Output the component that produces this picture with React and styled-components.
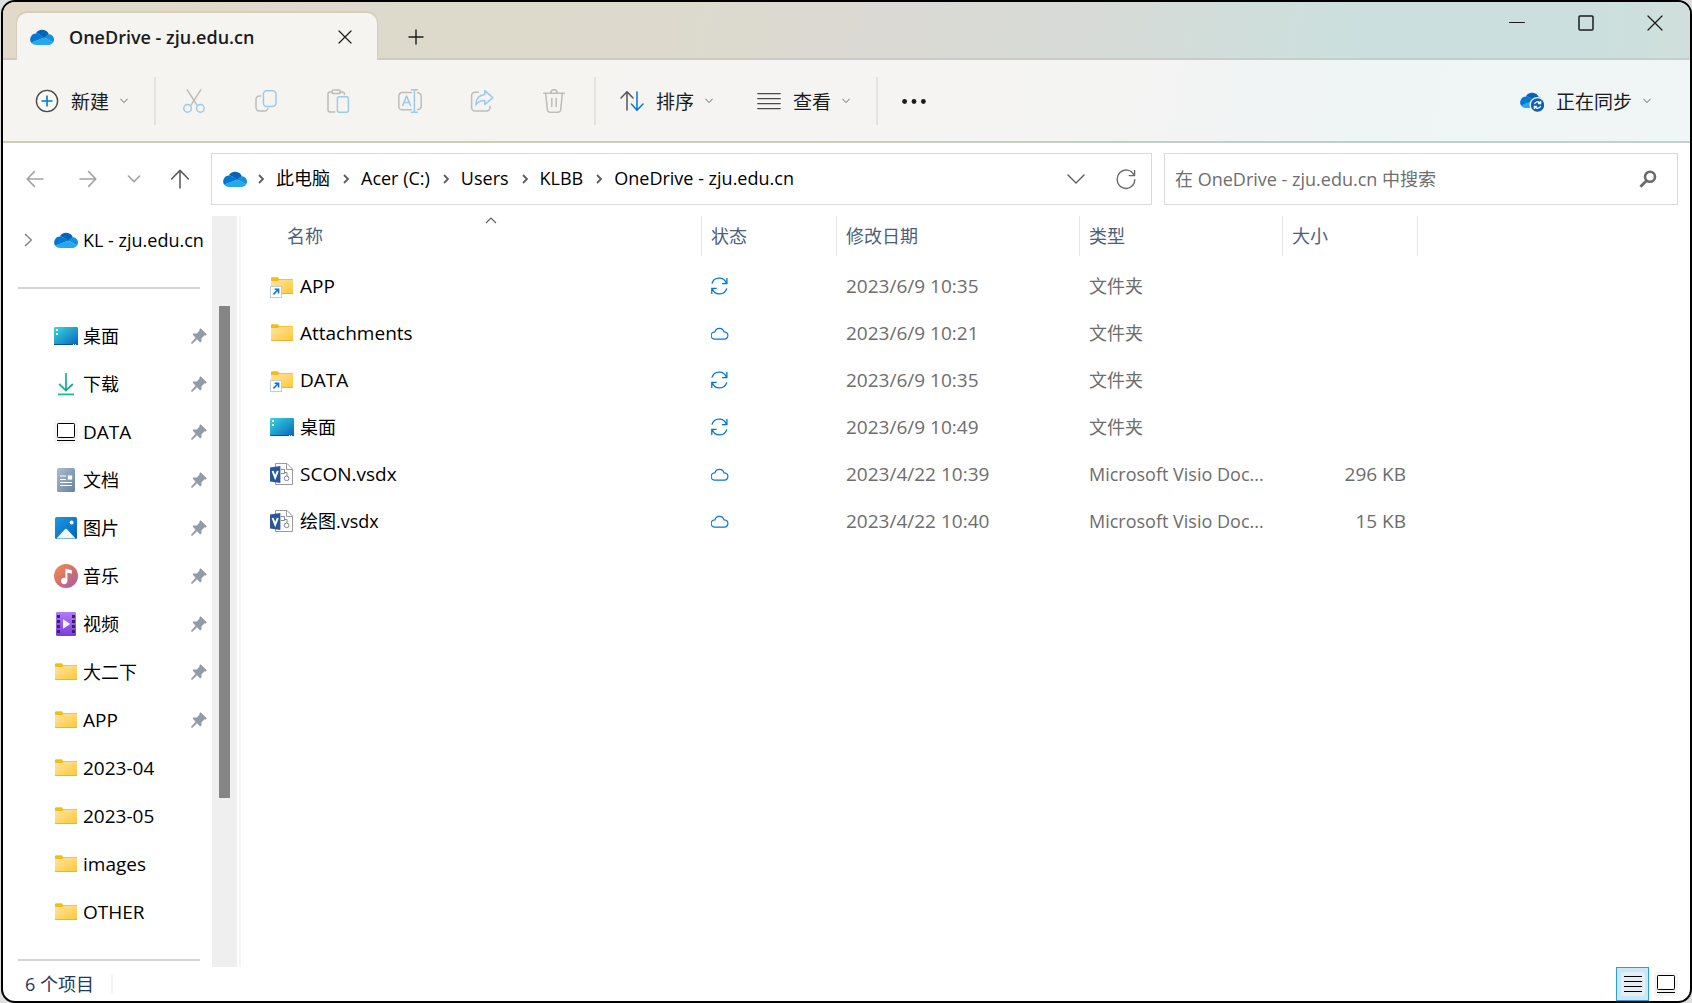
import React from "react";
import styled, { createGlobalStyle } from "styled-components";

const GlobalStyle = createGlobalStyle`
  *, *::before, *::after { box-sizing: border-box; }
  body {
    margin: 0;
    background: #dedede;
    font-family: "Open Sans", "Noto Sans CJK SC", sans-serif;
    font-size: 18px;
    line-height: 24px;
    color: #000;
  }
  button, input {
    font: inherit;
    color: inherit;
    background: none;
    border: 0;
    padding: 0;
    margin: 0;
  }
  svg { display: block; flex: none; }
`;

/* ---------- window frame ---------- */

const Window = styled.div`
  display: flex;
  flex-direction: column;
  height: 100vh;
  margin-left: 1px;
  border: 2px solid #000;
  border-radius: 14px;
  background: #fff;
  overflow: hidden;
`;

const TitleBar = styled.header`
  display: flex;
  flex: none;
  height: 58px;
  padding-left: 14px;
  border-bottom: 2px solid rgba(150, 150, 140, 0.22);
  background: linear-gradient(100deg, #e2d9c9 0%, #dddacb 25%, #dddacd 40%, #dbd9d4 52%, #d7dbd7 65%, #cbe0de 80%, #cbe0de 94%, #d0dfdc 100%);
`;

const Tab = styled.div`
  position: relative;
  display: flex;
  align-items: center;
  width: 360px;
  height: 47px;
  margin: 11px 0 -2px;
  padding: 0 25px 0 13px;
  border-radius: 10px 10px 0 0;
  background: #f5f4f0;
  box-shadow: 0 -1px 0 1px #d6cdbc;
  clip-path: inset(-2px -6px 0 -6px);
`;

const TabTitle = styled.span`
  flex: 1;
  margin-left: 15px;
  font-weight: 600;
  color: #1b1b1b;
  white-space: nowrap;
`;

const GlyphButton = styled.button`
  display: flex;
  align-items: center;
  justify-content: center;
  width: ${(p) => p.$w || 24}px;
  height: ${(p) => p.$h || 24}px;
`;

const NewTabSlot = styled.div`
  display: flex;
  align-items: center;
  padding: 13px 0 0 27px;
`;

const CaptionButtons = styled.div`
  display: flex;
  margin-left: auto;
`;

/* ---------- command bar ---------- */

const CommandBar = styled.div`
  display: flex;
  flex: none;
  align-items: center;
  height: 83px;
  padding: 0 17px 0 10px;
  border-bottom: 2px solid #cacdbf;
  border-image: linear-gradient(90deg, #cfcdb9, #c9cdbd 50%, #c0cfcc 80%, #c3d0ce) 1;
  background: linear-gradient(100deg, #f5f4f0 0%, #f4f4f2 65%, #eff4f5 78%, #f0f5f6 100%);
`;

const MenuButton = styled.button`
  display: flex;
  align-items: center;
  height: 48px;
  padding: 0 22px;
  font-size: 19px;
  color: #1b1b1b;
  white-space: nowrap;
  margin-left: ${(p) => (p.$end ? "auto" : 0)};
`;

const MenuLabel = styled.span`
  margin: 0 11px 0 12px;
  padding-top: 3px;
`;

const Separator = styled.span`
  width: 2px;
  height: 48px;
  margin: 0 2px 0 4px;
  background: #e4e3e0;
`;

/* ---------- navigation row ---------- */

const NavRow = styled.div`
  display: flex;
  flex: none;
  padding: 10px 12px 11px 5px;
`;

const NavButtons = styled.div`
  display: flex;
  flex: none;
  width: 203px;
`;

const AddressBar = styled.div`
  display: flex;
  flex: 1;
  align-items: center;
  min-width: 0;
  height: 52px;
  margin-right: 12px;
  padding-left: 11px;
  border: 1px solid #d9d9d9;
`;

const Crumbs = styled.nav`
  display: flex;
  flex: 1;
  align-items: center;
  white-space: nowrap;
`;

const Crumb = styled.button`
  margin: 0 13px 0 12px;
  padding-bottom: 2px;
`;

const CrumbRoot = styled.span`
  margin-right: 11px;
`;

const SearchBox = styled.label`
  display: flex;
  flex: 0 1 514px;
  align-items: center;
  height: 52px;
  padding: 0 20px 0 10px;
  border: 1px solid #d9d9d9;
`;

const SearchInput = styled.input`
  flex: 1;
  min-width: 0;
  outline: 0;
  &::placeholder { color: #6e6e6e; opacity: 1; }
`;

/* ---------- body ---------- */

const Body = styled.div`
  display: flex;
  flex: 1;
  min-height: 0;
`;

const Sidebar = styled.nav`
  flex: none;
  width: 209px;
  overflow: hidden;
`;

const SideItem = styled.a`
  display: flex;
  align-items: center;
  height: 48px;
  padding-right: 5px;
  color: #000;
  text-decoration: none;
  white-space: nowrap;
`;

const Expander = styled.span`
  flex: none;
  width: 51px;
  padding-left: 21px;
`;

const IconSlot = styled.span`
  display: flex;
  flex: none;
  justify-content: center;
  width: 24px;
  margin-right: ${(p) => p.$gap || 5}px;
`;

const SideLabel = styled.span`
  flex: 1;
  font-size: ${(p) => (p.$latin ? 19 : 18)}px;
`;

const SideDivider = styled.hr`
  height: 2px;
  margin: 23px 12px 23px 15px;
  border: 0;
  background: #d4d4d4;
`;

const ScrollTrack = styled.div`
  flex: none;
  width: 25px;
  padding: 90px 7px 0;
  background: #efefef;
`;

const ScrollThumb = styled.div`
  height: 75%;
  max-height: 492px;
  background: #858585;
`;

const Content = styled.main`
  flex: 1;
  min-width: 0;
  margin-left: 2px;
  border-left: 2px solid #f5f5f5;
`;

const FileTable = styled.table`
  width: 1177px;
  table-layout: fixed;
  border-collapse: collapse;
`;

const HeadCell = styled.th`
  position: relative;
  padding: 0 0 6px;
  font-weight: 400;
  text-align: left;
`;

const HeadButton = styled.button`
  display: block;
  width: 100%;
  height: 40px;
  padding-left: ${(p) => (p.$first ? 46 : 9)}px;
  border-right: 1px solid #e4e4e4;
  color: #4c607a;
  text-align: left;
`;

const SortCaret = styled.svg`
  position: absolute;
  top: 0;
  left: 50%;
`;

const Cell = styled.td`
  height: 47px;
  padding: 0 ${(p) => (p.$right ? 12 : 0)}px 0 9px;
  font-size: ${(p) => (p.$latin ? 19 : 18)}px;
  color: #6d6d6d;
  text-align: ${(p) => (p.$right ? "right" : "left")};
  white-space: nowrap;
`;

const FileName = styled.div`
  display: flex;
  align-items: center;
  padding-left: 20px;
  color: #000;
`;

const StatusBar = styled.footer`
  display: flex;
  flex: none;
  align-items: center;
  height: 34px;
  padding: 0 12px 0 22px;
  color: #1e395b;
`;

const StatusCount = styled.span`
  padding-right: 17px;
  border-right: 2px solid #f3f3f3;
  line-height: 18px;
`;

const ViewButton = styled.button`
  display: flex;
  align-items: center;
  justify-content: center;
  width: 33px;
  height: 34px;
  border: 1px solid ${(p) => (p.$active ? "#26a0da" : "transparent")};
  background: ${(p) => (p.$active ? "#cbe8f6" : "transparent")};
`;

const ViewButtons = styled.div`
  display: flex;
  margin: 0 -4px 0 auto;
`;

/* ---------- icons ---------- */

const CloudShape = () => (
  <>
    <path fill="#0078d4" d="M9.2 5.4A6 6 0 0 0 6 4.5 6 6 0 0 0 1.1 13.7L14.8 8.6z" />
    <path fill="#0364b8" d="M5.8 4.5A7.3 7.3 0 0 1 18.9 5.3L14.8 8.9 9.2 5.5A6 6 0 0 0 5.8 4.5z" />
    <path fill="#1490df" d="M19 5.2A5.4 5.4 0 0 1 23.2 13.4L14.2 8.5Q16.4 5.4 19 5.2z" />
    <path fill="#28a8ea" d="M14.3 8.4 23.2 13.2A5.3 5.3 0 0 1 19 16H6A6 6 0 0 1 1 13.5z" />
  </>
);

const OneDrive = () => (
  <svg width="24" height="16" viewBox="0 0 24 16"><CloudShape /></svg>
);

const OneDriveSync = () => (
  <svg width="24" height="24" viewBox="0 0 24 24">
    <g transform="translate(0 3)"><CloudShape /></g>
    <circle cx="17.5" cy="16" r="8" fill="#f0f5f6" />
    <circle cx="17.5" cy="16" r="6.7" fill="#0f5fb8" />
    <path d="M14.4 15.2a3.2 3.2 0 0 1 5.8-1M20.6 12v2.5h-2.5M20.6 16.8a3.2 3.2 0 0 1-5.8 1M14.4 20v-2.5h2.5" fill="none" stroke="#fff" strokeWidth="1.3" />
  </svg>
);

const Line = ({ w, h = w, d, c = "#1b1b1b", s = 1.5, children }) => (
  <svg width={w} height={h} viewBox={`0 0 ${w} ${h}`} fill="none" stroke={c} strokeWidth={s} strokeLinecap="round" strokeLinejoin="round">
    {d && <path d={d} />}
    {children}
  </svg>
);

const MenuChevron = () => <Line w={8} h={6} d="M.6 1l3.4 3.6L7.4 1" c="#6a6a6a" s={1} />;

const GREY = "#bdbcba";
const BLUE = "#9ccaec";

const AddIcon = () => (
  <Line w={24} c="#4a4a4a" s={1.4}>
    <circle cx="12" cy="12" r="10.6" fill="#fbfbfa" />
    <path d="M12 7v10M7 12h10" stroke="#0078d4" strokeWidth="1.6" />
  </Line>
);

const CutIcon = () => (
  <Line w={24} c={GREY}>
    <path d="M5.2 .8L15 16.2M18.8 .8L9 16.2" />
    <circle cx="5.6" cy="19.4" r="3.8" stroke={BLUE} fill="#f5f4f0" />
    <circle cx="18.4" cy="19.4" r="3.8" stroke={BLUE} fill="#f5f4f0" />
  </Line>
);

const CopyIcon = () => (
  <Line w={24} c={GREY}>
    <path d="M6.6 7H5.4a3.4 3.4 0 0 0-3.4 3.4v8.2A3.4 3.4 0 0 0 5.4 22h5.2a3.4 3.4 0 0 0 3.2-2.4" />
    <rect x="9.4" y="1.8" width="12.6" height="15.6" rx="3.4" stroke={BLUE} />
  </Line>
);

const PasteIcon = () => (
  <Line w={24} c={GREY}>
    <path d="M6 3H4a2 2 0 0 0-2 2v16a2 2 0 0 0 2 2h4.6M14 3h2.4a2 2 0 0 1 2 2v.6" />
    <rect x="6" y="1" width="8.4" height="3.6" rx="1.8" />
    <rect x="11.4" y="7.8" width="11" height="15.4" rx="2" stroke={BLUE} />
  </Line>
);

const RenameIcon = () => (
  <Line w={24} c={GREY}>
    <path d="M13.4 3.6H4.2A3.4 3.4 0 0 0 .8 7v10.4a3.4 3.4 0 0 0 3.4 3.4h9.2M19.6 3.8a3.4 3.4 0 0 1 3.6 3.4v10a3.4 3.4 0 0 1-3.6 3.4" />
    <path d="M4.6 16.6L8.6 7l4 9.6M6 13.6h5.4M16.4 .8v22.4M13.4 .8h6M13.4 23.2h6" stroke={BLUE} />
  </Line>
);

const ShareIcon = () => (
  <Line w={24} c={GREY}>
    <path d="M8.4 3.2H5A3.4 3.4 0 0 0 1.6 6.6v12A3.4 3.4 0 0 0 5 22h11.6a3.4 3.4 0 0 0 3.4-3.4v-1.4" />
    <path d="M14.8 1.6l8 7-8 7v-4q-5.8-.2-9 4.4Q6.2 6.4 14.8 5.6z" stroke={BLUE} />
  </Line>
);

const TrashIcon = () => (
  <Line w={24} c={GREY}>
    <path d="M1.6 4.2h20.8M3.6 4.2l1.8 17a2.4 2.4 0 0 0 2.4 2h8.4a2.4 2.4 0 0 0 2.4-2l1.8-17M8.8 4a3.2 3.2 0 0 1 6.4 0M9.8 9.6v7.8M14.2 9.6v7.8" />
  </Line>
);

const SortIcon = () => (
  <Line w={24} c="#555">
    <path d="M7 21V3M1 9l6-6.2L13 9" />
    <path d="M17 3v18M11.4 15l5.6 6.2L23 15" stroke="#0078d4" />
  </Line>
);

const ViewIcon = () => (
  <Line w={24} c="#4a4a4a" s={1.4} d="M.8 4.6h22.4M.8 9.6h22.4M.8 14.6h22.4M.8 19.6h22.4" />
);

const MoreIcon = () => (
  <svg width="24" height="24" viewBox="0 0 24 24" fill="#1b1b1b">
    <circle cx="2.6" cy="12.5" r="2.4" /><circle cx="12" cy="12.5" r="2.4" /><circle cx="21.4" cy="12.5" r="2.4" />
  </svg>
);

const Folder = ({ link }) => (
  <svg width="24" height="24" viewBox="0 0 24 24">
    <defs>
      <linearGradient id="folderFill" x1="0" y1="0" x2="1" y2="1">
        <stop offset="0" stopColor="#ffe69c" /><stop offset="1" stopColor="#ffc73a" />
      </linearGradient>
    </defs>
    <path fill="#fbb917" d="M1 4.2Q1 3.2 2 3.2H7.6L9.4 5H23V9H1z" />
    <path fill="url(#folderFill)" d="M1 7H8L9.6 5.8H23V20H1z" />
    <path fill="#eba82c" d="M1 19.2H23V20H1z" />
    {link && (
      <>
        <rect x=".5" y="12.5" width="11" height="11" fill="#fff" stroke="#c3ccd6" />
        <path d="M3.4 20.4L8.4 15.4M4.6 15.2H8.6V19.4" fill="none" stroke="#0a78d0" strokeWidth="1.5" />
      </>
    )}
  </svg>
);

const Desktop = () => (
  <svg width="24" height="24" viewBox="0 0 24 24">
    <defs>
      <linearGradient id="deskFill" x1="0" y1="0" x2="1" y2="1">
        <stop offset="0" stopColor="#36d9e0" /><stop offset="1" stopColor="#0b63ba" />
      </linearGradient>
    </defs>
    <rect y="3" width="24" height="18" rx="1.2" fill="url(#deskFill)" />
    <path fill="#0a5495" d="M0 20H24V20.4Q24 21 23 21H1Q0 21 0 20.4z" />
    <path fill="#fff" d="M2 5h2v2H2zM2 9h2v2H2zM19 20h1v1h-1zM21 20h1v1h-1z" />
  </svg>
);

const Download = () => (
  <svg width="24" height="24" viewBox="0 0 24 24" fill="none">
    <defs>
      <linearGradient id="downFill" gradientUnits="userSpaceOnUse" x1="4" y1="0" x2="18" y2="20">
        <stop offset="0" stopColor="#2bc78c" /><stop offset="1" stopColor="#10a0a0" />
      </linearGradient>
    </defs>
    <path d="M12 1V18.4M5.2 12L12 18.6 18.8 12" stroke="url(#downFill)" strokeWidth="1.8" />
    <path d="M4 22.4H20" stroke="#1fb795" strokeWidth="1.8" />
  </svg>
);

const Drive = () => (
  <svg width="24" height="24" viewBox="0 0 24 24">
    <rect width="24" height="24" rx="3" fill="#f5f5f5" />
    <rect x="3.5" y="3.5" width="17" height="14" rx=".8" fill="#fff" stroke="#000" />
    <path d="M3 20.5H21" stroke="#000" />
  </svg>
);

const Documents = () => (
  <svg width="24" height="24" viewBox="0 0 24 24">
    <defs>
      <linearGradient id="docFill" x1="0" y1="0" x2="1" y2="1">
        <stop offset="0" stopColor="#a9bdd0" /><stop offset="1" stopColor="#66829f" />
      </linearGradient>
    </defs>
    <rect x="3" width="18" height="24" rx="1.5" fill="url(#docFill)" />
    <path d="M6 8H12M6 11.5H12M6 14.5H18M6 17.5H18" stroke="#fff" strokeWidth="1.2" />
    <rect x="13.8" y="7.4" width="4.4" height="4.2" fill="#fff" />
  </svg>
);

const Pictures = () => (
  <svg width="24" height="24" viewBox="0 0 24 24">
    <defs>
      <linearGradient id="picFill" x1="0" y1="0" x2="1" y2="1">
        <stop offset="0" stopColor="#1a9be6" /><stop offset="1" stopColor="#0462b4" />
      </linearGradient>
    </defs>
    <rect x="1" y="1" width="22" height="22" rx="1.6" fill="url(#picFill)" />
    <path d="M2.4 22.4L10.8 13.4Q12 12.2 13.2 13.4L21.6 22.4z" fill="#f2f8fd" />
    <circle cx="17.6" cy="6.6" r="2" fill="#fff" />
  </svg>
);

const Music = () => (
  <svg width="24" height="24" viewBox="0 0 24 24">
    <defs>
      <linearGradient id="musicFill" x1="0" y1="0" x2="1" y2="1">
        <stop offset=".1" stopColor="#f08a50" /><stop offset=".55" stopColor="#d06c74" /><stop offset="1" stopColor="#9a5fb5" />
      </linearGradient>
    </defs>
    <circle cx="12" cy="12" r="12" fill="url(#musicFill)" />
    <path fill="#fff" d="M11.4 4.4L17.8 6.2V9.8L13.4 8.6V17A3.2 3.2 0 1 1 11.4 14z" />
  </svg>
);

const Videos = () => (
  <svg width="24" height="24" viewBox="0 0 24 24">
    <defs>
      <linearGradient id="videoFill" x1="0" y1="0" x2="0" y2="1">
        <stop offset="0" stopColor="#b07cf6" /><stop offset="1" stopColor="#7c3bd8" />
      </linearGradient>
    </defs>
    <rect x="2" width="20" height="24" rx="1.2" fill="url(#videoFill)" />
    <path fill="#3b2168" d="M3 3h3v3H3zM3 8h3v3H3zM3 13h3v3H3zM3 18h3v3H3zM18 3h3v3h-3zM18 8h3v3h-3zM18 13h3v3h-3zM18 18h3v3h-3z" />
    <path fill="#f3ecfd" d="M9 7.2L16.4 12 9 16.8z" />
  </svg>
);

const Visio = () => (
  <svg width="24" height="24" viewBox="0 0 24 24">
    <path d="M5.5 1.5H17L22.5 7V22.5H5.5z" fill="#fff" stroke="#9a9a9a" />
    <path d="M16.5 1.5V7.5H22.5" fill="none" stroke="#9a9a9a" />
    <path d="M11 7.5H14.5V11.5H11M14.5 10.5H17V14" fill="none" stroke="#8a8a8a" />
    <circle cx="16.6" cy="16.4" r="2.3" fill="#fff" stroke="#8a8a8a" />
    <path fill="#2b579a" d="M0 5.6L10.4 4V21L0 19.4z" />
    <path d="M2.6 9L5.2 15.6 7.8 9" fill="none" stroke="#fff" strokeWidth="2" />
  </svg>
);

const Pin = () => (
  <svg width="16" height="16" viewBox="0 0 16 16">
    <path fill="#929ca4" d="M9.6 .2L15.8 6.2 14.6 7.6 13.2 7.4 10.6 10.2 10.4 13.4 9.2 14.4 6 11.2 1.4 15.8 .2 15.6 .2 14.6 4.6 9.8 1.6 6.6 2.6 5.4 5.8 5.4 8.6 2.6 8.4 1.4z" />
  </svg>
);

const SyncStatus = () => (
  <svg width="18" height="18" viewBox="0 0 18 18" fill="none" stroke="#0078d4" strokeWidth="1.3">
    <path d="M.9 6.6A7.6 7.6 0 0 1 15.4 6.2M15.9 1V6.6H11M15.8 11.4A7.6 7.6 0 0 1 1.3 11.8M.8 17V11.4H5.7" />
  </svg>
);

const CloudStatus = () => (
  <svg width="18" height="18" viewBox="0 0 18 18" fill="none" stroke="#0078d4" strokeWidth="1.2">
    <path d="M3.8 15.2A3.6 3.6 0 0 1 3.9 7.8A4.7 4.7 0 0 1 13 7.8A3.7 3.7 0 0 1 13.4 15.2z" />
  </svg>
);

const RefreshIcon = () => (
  <Line w={20} h={22} c="#6b6b6b" s={1.4} d="M18 7.4A8.8 9.2 0 1 0 18.8 11.6M18.6 2.4V7.6H13.2" />
);

const SearchIcon = () => (
  <svg width="18" height="18" viewBox="0 0 18 18" fill="none" stroke="#6b6b6b">
    <circle cx="11" cy="6.8" r="5" strokeWidth="2.6" />
    <path d="M7.4 10.8L1.4 16.8" strokeWidth="2.8" />
  </svg>
);

const CrumbArrow = () => (
  <svg width="6" height="10" viewBox="0 0 6 10" fill="none" stroke="#5c5c5c" strokeWidth="1.8">
    <path d="M1 1l4 4-4 4" />
  </svg>
);

/* ---------- data ---------- */

const isLatin = (s) => /^[\x20-\x7e]*$/.test(s);

const sideItems = [
  { icon: <Desktop />, label: "桌面", pinned: true },
  { icon: <Download />, label: "下载", pinned: true },
  { icon: <Drive />, label: "DATA", pinned: true },
  { icon: <Documents />, label: "文档", pinned: true },
  { icon: <Pictures />, label: "图片", pinned: true },
  { icon: <Music />, label: "音乐", pinned: true },
  { icon: <Videos />, label: "视频", pinned: true },
  { icon: <Folder />, label: "大二下", pinned: true },
  { icon: <Folder />, label: "APP", pinned: true },
  { icon: <Folder />, label: "2023-04" },
  { icon: <Folder />, label: "2023-05" },
  { icon: <Folder />, label: "images" },
  { icon: <Folder />, label: "OTHER" },
];

const files = [
  { icon: <Folder link />, name: "APP", status: "sync", date: "2023/6/9 10:35", type: "文件夹", size: "" },
  { icon: <Folder />, name: "Attachments", status: "cloud", date: "2023/6/9 10:21", type: "文件夹", size: "" },
  { icon: <Folder link />, name: "DATA", status: "sync", date: "2023/6/9 10:35", type: "文件夹", size: "" },
  { icon: <Desktop />, name: "桌面", status: "sync", date: "2023/6/9 10:49", type: "文件夹", size: "" },
  { icon: <Visio />, name: "SCON.vsdx", status: "cloud", date: "2023/4/22 10:39", type: "Microsoft Visio Doc...", size: "296 KB" },
  { icon: <Visio />, name: "绘图.vsdx", status: "cloud", date: "2023/4/22 10:40", type: "Microsoft Visio Doc...", size: "15 KB" },
];

const crumbs = ["此电脑", "Acer (C:)", "Users", "KLBB", "OneDrive - zju.edu.cn"];

const tools = [
  ["剪切", <CutIcon />],
  ["复制", <CopyIcon />],
  ["粘贴", <PasteIcon />],
  ["重命名", <RenameIcon />],
  ["共享", <ShareIcon />],
  ["删除", <TrashIcon />],
];

const columns = [
  ["名称", 461],
  ["状态", 135],
  ["修改日期", 243],
  ["类型", 203],
  ["大小", 135],
];

export default function App() {
  return (
    <>
      <GlobalStyle />
      <Window>
        <TitleBar>
          <Tab>
            <OneDrive />
            <TabTitle>OneDrive - zju.edu.cn</TabTitle>
            <GlyphButton $w={14} aria-label="关闭标签页">
              <Line w={14} d="M1 1l12 12M13 1L1 13" s={1.2} />
            </GlyphButton>
          </Tab>
          <NewTabSlot>
            <GlyphButton $w={24} aria-label="新建标签页">
              <Line w={16} d="M8 1v14M1 8h14" s={1.4} />
            </GlyphButton>
          </NewTabSlot>
          <CaptionButtons>
            <GlyphButton $w={70} $h={42} aria-label="最小化">
              <Line w={16} d="M.5 7.5h15" s={1} />
            </GlyphButton>
            <GlyphButton $w={68} $h={42} aria-label="最大化">
              <Line w={16} s={1.5}><rect x="1" y="1" width="14" height="14" rx="1" /></Line>
            </GlyphButton>
            <GlyphButton $w={70} $h={42} aria-label="关闭">
              <Line w={16} d="M1 1l14 14M15 1L1 15" s={1.3} />
            </GlyphButton>
          </CaptionButtons>
        </TitleBar>

        <CommandBar>
          <MenuButton>
            <AddIcon />
            <MenuLabel>新建</MenuLabel>
            <MenuChevron />
          </MenuButton>
          <Separator />
          {tools.map(([name, icon]) => (
            <GlyphButton key={name} $w={72} $h={48} aria-label={name}>{icon}</GlyphButton>
          ))}
          <Separator />
          <MenuButton>
            <SortIcon />
            <MenuLabel>排序</MenuLabel>
            <MenuChevron />
          </MenuButton>
          <MenuButton>
            <ViewIcon />
            <MenuLabel>查看</MenuLabel>
            <MenuChevron />
          </MenuButton>
          <Separator />
          <MenuButton aria-label="查看更多"><MoreIcon /></MenuButton>
          <MenuButton $end>
            <OneDriveSync />
            <MenuLabel>正在同步</MenuLabel>
            <MenuChevron />
          </MenuButton>
        </CommandBar>

        <NavRow>
          <NavButtons>
            <GlyphButton $w={54} $h={52} aria-label="后退">
              <Line w={18} c="#a3a3a3" s={1.6} d="M17 9H1.4M8.4 1.6L1.2 9l7.2 7.4" />
            </GlyphButton>
            <GlyphButton $w={52} $h={52} aria-label="前进">
              <Line w={18} c="#a3a3a3" s={1.6} d="M1 9h15.6M9.6 1.6L16.8 9l-7.2 7.4" />
            </GlyphButton>
            <GlyphButton $w={39} $h={52} aria-label="最近浏览的位置">
              <Line w={14} h={10} c="#a3a3a3" s={1.6} d="M1.4 2L7 7.6 12.6 2" />
            </GlyphButton>
            <GlyphButton $w={54} $h={52} aria-label="向上">
              <Line w={20} c="#5f5f5f" s={1.6} d="M10 19V1.6M1.6 10L10 1.4 18.4 10" />
            </GlyphButton>
          </NavButtons>
          <AddressBar>
            <Crumbs aria-label="路径">
              <CrumbRoot><OneDrive /></CrumbRoot>
              {crumbs.map((c) => (
                <React.Fragment key={c}>
                  <CrumbArrow />
                  <Crumb>{c}</Crumb>
                </React.Fragment>
              ))}
            </Crumbs>
            <GlyphButton $w={50} $h={50} aria-label="以前的位置">
              <Line w={18} h={12} c="#5f5f5f" s={1.4} d="M1 2l8 8 8-8" />
            </GlyphButton>
            <GlyphButton $w={50} $h={50} aria-label="刷新"><RefreshIcon /></GlyphButton>
          </AddressBar>
          <SearchBox>
            <SearchInput type="text" aria-label="搜索" placeholder="在 OneDrive - zju.edu.cn 中搜索" />
            <SearchIcon />
          </SearchBox>
        </NavRow>

        <Body>
          <Sidebar aria-label="导航窗格">
            <SideItem href="#">
              <Expander><Line w={9} h={14} c="#8a8a8a" d="M1.4 1.4L7.4 7l-6 5.6" /></Expander>
              <IconSlot><OneDrive /></IconSlot>
              <SideLabel>KL - zju.edu.cn</SideLabel>
            </SideItem>
            <SideDivider />
            {sideItems.map((it) => (
              <SideItem href="#" key={it.label}>
                <Expander />
                <IconSlot>{it.icon}</IconSlot>
                <SideLabel $latin={isLatin(it.label)}>{it.label}</SideLabel>
                {it.pinned && <Pin />}
              </SideItem>
            ))}
            <SideDivider />
          </Sidebar>
          <ScrollTrack><ScrollThumb /></ScrollTrack>
          <Content>
            <FileTable>
              <colgroup>
                {columns.map(([name, w]) => <col key={name} width={w} />)}
              </colgroup>
              <thead>
                <tr>
                  {columns.map(([name], i) => (
                    <HeadCell key={name} scope="col">
                      <HeadButton $first={i === 0}>{name}</HeadButton>
                      {i === 0 && (
                        <SortCaret width="38" height="9" viewBox="0 0 38 9" fill="none" stroke="#5c5c5c" strokeWidth="1.1">
                          <path d="M14 7l5-5 5 5" />
                        </SortCaret>
                      )}
                    </HeadCell>
                  ))}
                </tr>
              </thead>
              <tbody>
                {files.map((f) => (
                  <tr key={f.name}>
                    <Cell $latin={isLatin(f.name)}>
                      <FileName><IconSlot $gap={6}>{f.icon}</IconSlot>{f.name}</FileName>
                    </Cell>
                    <Cell>{f.status === "sync" ? <SyncStatus /> : <CloudStatus />}</Cell>
                    <Cell $latin>{f.date}</Cell>
                    <Cell>{f.type}</Cell>
                    <Cell $latin $right>{f.size}</Cell>
                  </tr>
                ))}
              </tbody>
            </FileTable>
          </Content>
        </Body>

        <StatusBar>
          <StatusCount>6 个项目</StatusCount>
          <ViewButtons>
            <ViewButton $active aria-label="详细信息">
              <svg width="24" height="24" viewBox="0 0 24 24">
                <rect width="24" height="24" rx="3" fill="#e4eef4" />
                <path d="M3 4.5H21M3 9.5H21M3 14.5H21M3 19.5H21" stroke="#000" />
              </svg>
            </ViewButton>
            <ViewButton aria-label="大图标"><Drive /></ViewButton>
          </ViewButtons>
        </StatusBar>
      </Window>
    </>
  );
}
